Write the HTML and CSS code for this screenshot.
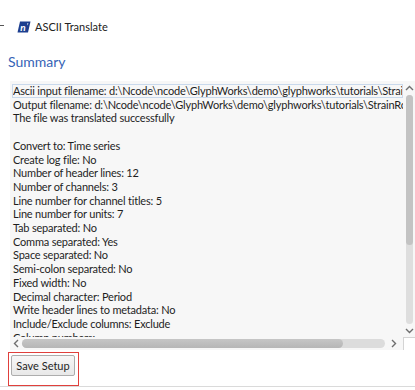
FILE: index.html
```html
<!DOCTYPE html>
<html lang="en">
<head>
  <meta charset="UTF-8">
  <title>ASCII Translate</title>
  <link rel="stylesheet" href="styles.css">
</head>
<body>
  <div class="titlebar">
    <span class="dash"></span>
    <svg class="logo" width="14" height="12" viewBox="0 0 14 12">
      <path d="M3 0.5 H13.5 L11 11.5 H0.5 Z" fill="#1d3f8f"/>
      <text x="3.2" y="9.6" font-family="Lato, sans-serif" font-weight="bold" font-style="italic" font-size="10" fill="#fff">n</text>
      <path d="M10.2 2.2 L11.4 2.2 L10.6 4.6 Z" fill="#fff"/>
    </svg>
    <span class="title">ASCII Translate</span>
  </div>

  <h2 class="section">Summary</h2>

  <div class="listbox">
    <div class="items">
      <div class="row selected">Ascii input filename: d:\Ncode\ncode\GlyphWorks\demo\glyphworks\tutorials\StrainRosette.csv</div>
      <div class="row">Output filename: d:\Ncode\ncode\GlyphWorks\demo\glyphworks\tutorials\StrainRosette.s3t</div>
      <div class="row">The file was translated successfully</div>
      <div class="row">&nbsp;</div>
      <div class="row">Convert to: Time series</div>
      <div class="row">Create log file: No</div>
      <div class="row">Number of header lines: 12</div>
      <div class="row">Number of channels: 3</div>
      <div class="row">Line number for channel titles: 5</div>
      <div class="row">Line number for units: 7</div>
      <div class="row">Tab separated: No</div>
      <div class="row">Comma separated: Yes</div>
      <div class="row">Space separated: No</div>
      <div class="row">Semi-colon separated: No</div>
      <div class="row">Fixed width: No</div>
      <div class="row">Decimal character: Period</div>
      <div class="row">Write header lines to metadata: No</div>
      <div class="row">Include/Exclude columns: Exclude</div>
      <div class="row">Column numbers:</div>
    </div>

    <div class="vscroll">
      <svg class="arrow" width="9" height="6" viewBox="0 0 9 6"><polyline points="1,5 4.5,1.5 8,5" fill="none" stroke="#6e6e6e" stroke-width="1.4"/></svg>
      <div class="vtrack"><div class="vthumb"></div></div>
      <svg class="arrow" width="9" height="6" viewBox="0 0 9 6"><polyline points="1,1 4.5,4.5 8,1" fill="none" stroke="#6e6e6e" stroke-width="1.4"/></svg>
    </div>

    <div class="hscroll">
      <svg class="arrow" width="6" height="9" viewBox="0 0 6 9"><polyline points="5,1 1.5,4.5 5,8" fill="none" stroke="#6e6e6e" stroke-width="1.4"/></svg>
      <div class="htrack"><div class="hthumb"></div></div>
      <svg class="arrow" width="6" height="9" viewBox="0 0 6 9"><polyline points="1,1 4.5,4.5 1,8" fill="none" stroke="#6e6e6e" stroke-width="1.4"/></svg>
    </div>

    <div class="corner"></div>
  </div>

  <div class="actions">
    <div class="marked">
      <button class="btn">Save Setup</button>
    </div>
  </div>
</body>
</html>
```

FILE: styles.css
```css
body {
  margin: 0;
  width: 415px;
  height: 390px;
  overflow: hidden;
  background-color: #fff;
  color: #1e1e1e;
  font-family: Lato, "Liberation Sans", sans-serif;
  font-size: 11px;
}
.titlebar {
  display: flex;
  align-items: center;
  height: 14px;
  padding-top: 20px;
}
.dash {
  width: 4px;
  height: 1px;
  background-color: #555;
  margin-right: 13px;
  margin-top: -4px;
}
.logo {
  display: block;
  margin-right: 4px;
}
.title {
  line-height: 14px;
  color: #222;
}
.section {
  margin: 19px 0 11px 0;
  padding-left: 8px;
  font-size: 14px;
  line-height: 17px;
  font-weight: normal;
  color: #3563b6;
}
.listbox {
  display: grid;
  grid-template-columns: 393px 12px;
  grid-template-rows: 256px 13px;
  margin-left: 10px;
  width: 405px;
  background-color: #f7f7f7;
}
.items {
  overflow: hidden;
  padding: 3px 0 0 2px;
  white-space: nowrap;
}
.row {
  line-height: 13.7px;
  padding-left: 1px;
  letter-spacing: -0.2px;
}
.row.selected {
  outline: 1px solid #c9d9ec;
  outline-offset: -1px;
}
.arrow {
  display: block;
}
.vscroll {
  display: flex;
  flex-direction: column;
  align-items: center;
  padding-top: 4px;
}
.vscroll .arrow:first-child {
  margin-bottom: 4px;
}
.vscroll .arrow:last-child {
  margin: 4px 0 3px 0;
}
.vtrack {
  flex: 1;
  width: 7px;
  border-radius: 4px;
  background-color: #dedede;
}
.vthumb {
  height: 150px;
  border-radius: 4px;
  background-color: #c3c3c3;
}
.hscroll {
  display: flex;
  align-items: center;
  padding-left: 3px;
}
.htrack {
  flex: 1;
  height: 9px;
  margin: 0 6px 0 3px;
  border-radius: 5px;
  background-color: #dcdcdc;
}
.hthumb {
  width: 321px;
  height: 9px;
  border-radius: 5px;
  background: linear-gradient(#c6c6c6, #b6b6b6);
}
.hscroll .arrow:last-child {
  margin-right: 6px;
}
.corner {
  background-color: #fff;
  border-left: 1px solid #d4d4d4;
  border-top: 1px solid #d4d4d4;
}
.actions {
  height: 37px;
  padding: 2px 0 0 8px;
  box-sizing: border-box;
  border-bottom: 1px solid #dadada;
}
.marked {
  display: inline-block;
  border: 1px solid #e0403c;
  padding: 2px 3px 9px 2px;
}
.btn {
  display: block;
  width: 64px;
  height: 21px;
  padding: 0;
  font-family: Lato, "Liberation Sans", sans-serif;
  font-size: 11px;
  color: #1e1e1e;
  background: linear-gradient(#f7f7f7, #e8e8e8);
  border: 1px solid #adadad;
  border-radius: 2px;
}
```
